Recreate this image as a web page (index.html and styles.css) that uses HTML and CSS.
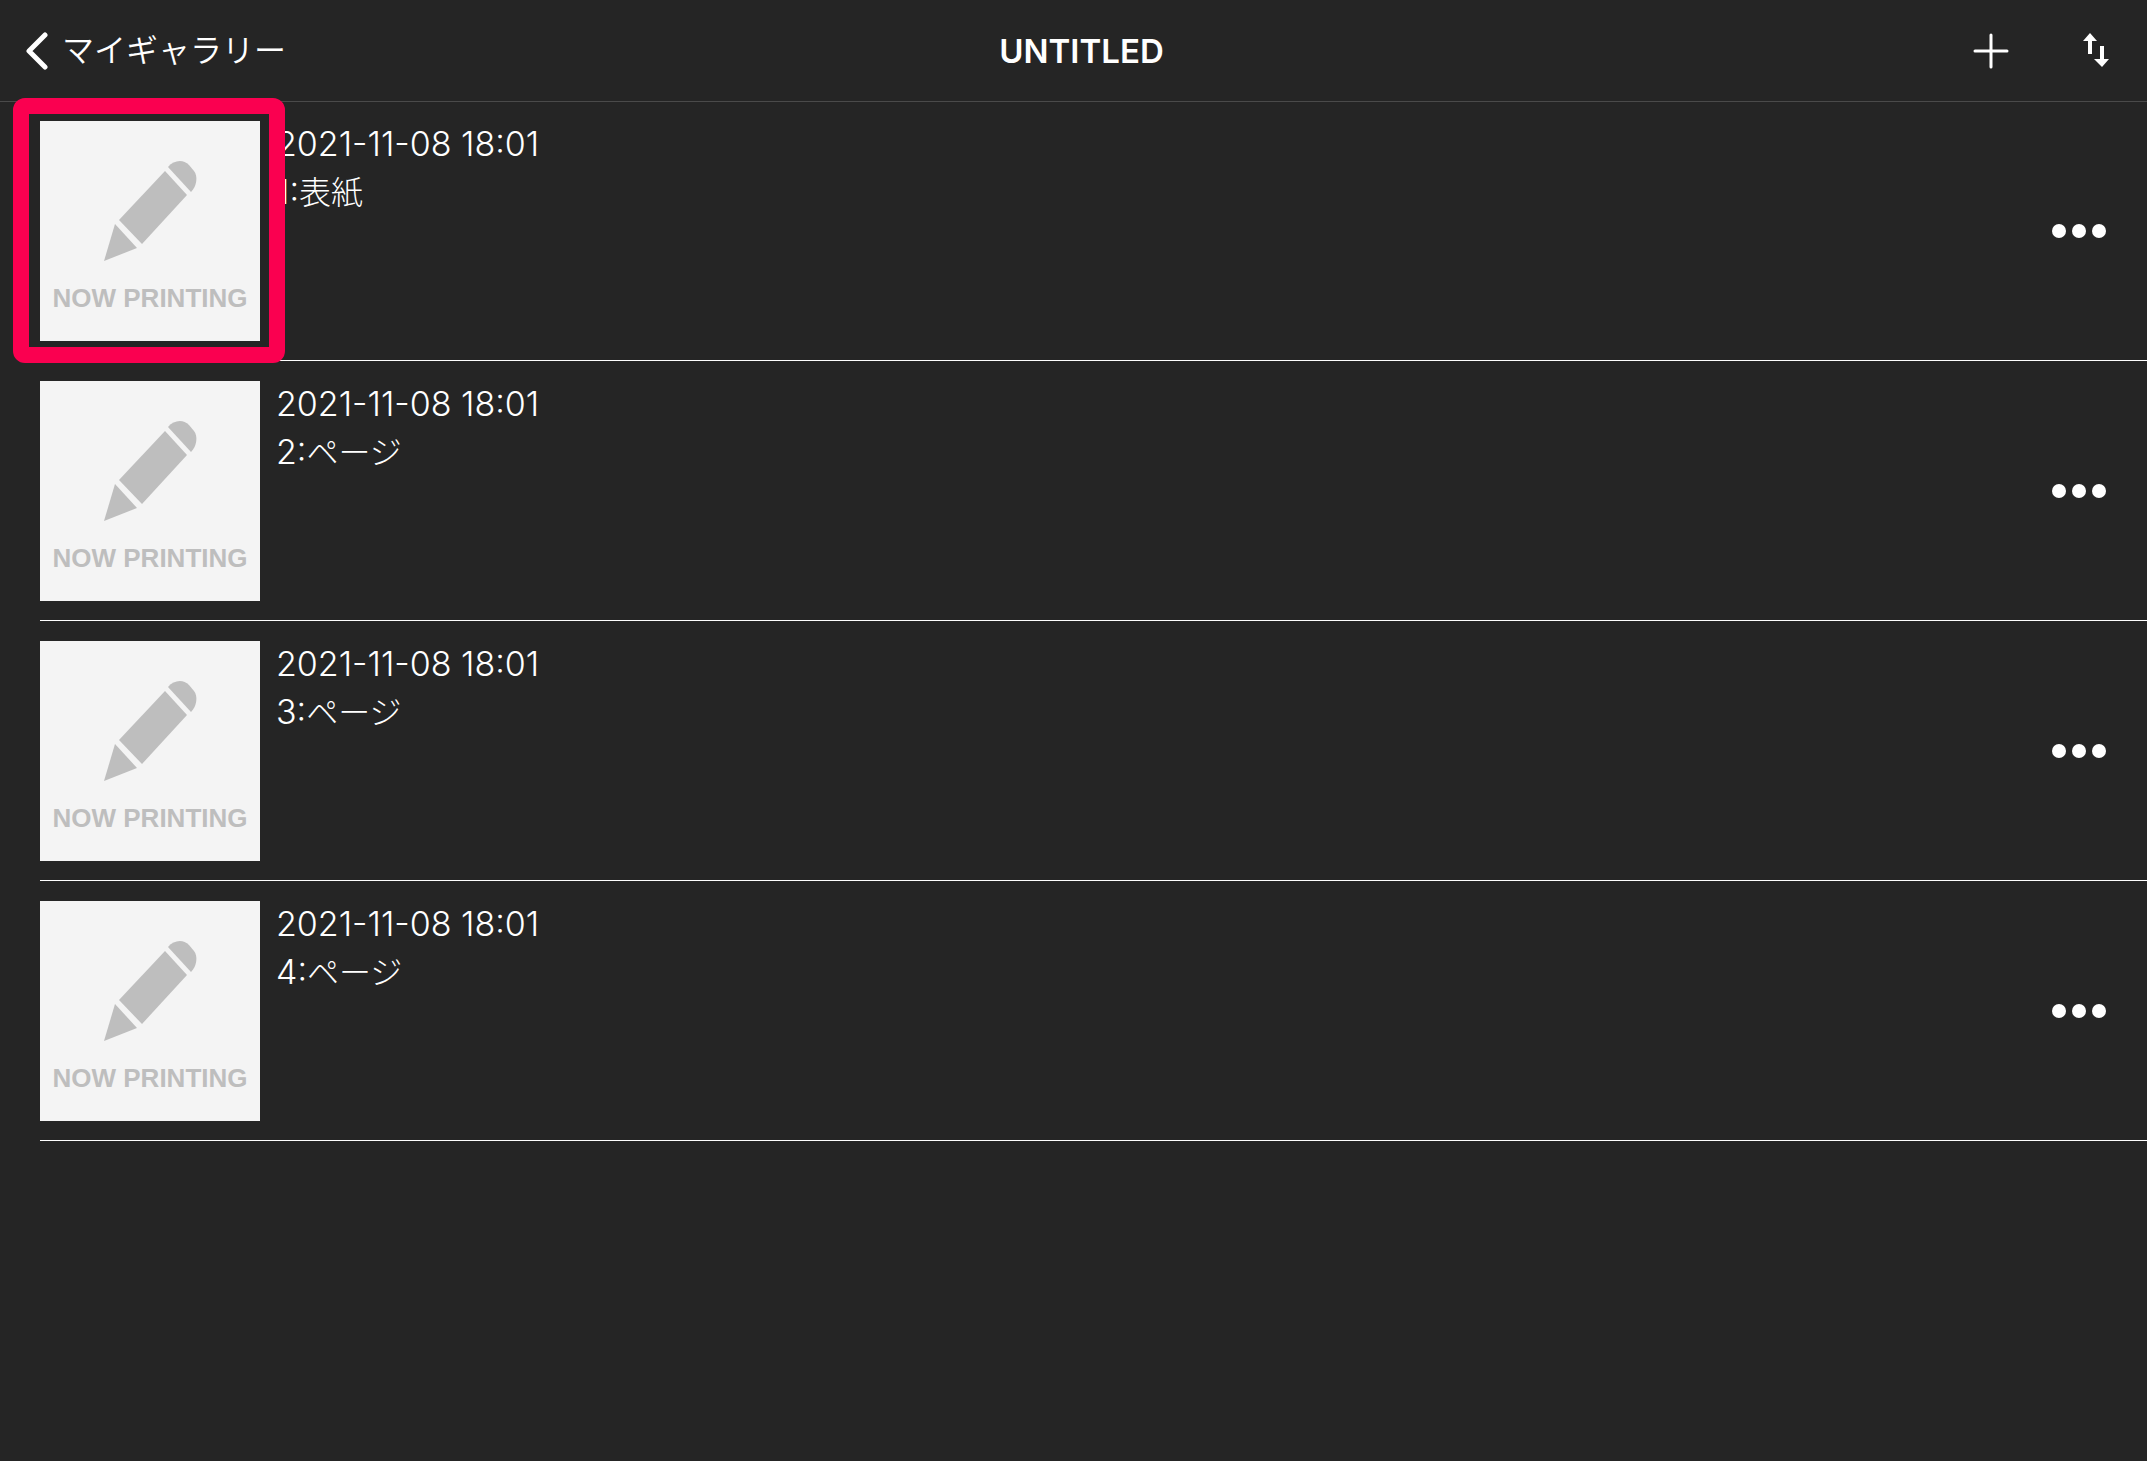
FILE: index.html
```html
<!DOCTYPE html>
<html lang="ja">
<head>
<meta charset="utf-8">
<meta name="viewport" content="width=device-width, initial-scale=1">
<title>UNTITLED</title>
<link rel="stylesheet" href="styles.css">
</head>
<body>

<!-- shared icons -->
<svg class="defs" aria-hidden="true">
  <symbol id="pencil" viewBox="0 0 220 150">
    <path d="M64 140 L75 103 L97 127 Z"/>
    <path d="M79 99 L125 50 L147 74 L102 123 Z"/>
    <path d="M128 46 C134 39 143 38 149 44 L154 50 C158 55 157 65 151 71 Z"/>
  </symbol>
  <symbol id="dots" viewBox="0 0 54 14">
    <circle cx="7" cy="7" r="7"/>
    <circle cx="27" cy="7" r="7"/>
    <circle cx="47" cy="7" r="7"/>
  </symbol>
</svg>

<header class="navbar">
  <a class="back" href="#">
    <svg class="chevron" viewBox="0 0 22 38"><path d="M19 3 L3 19 L19 35"/></svg>
    <span>マイギャラリー</span>
  </a>
  <h1 class="title">UNTITLED</h1>
  <div class="actions">
    <button type="button" aria-label="追加">
      <svg class="plus" viewBox="0 0 36 36"><path d="M18 2 V34 M2 18 H34"/></svg>
    </button>
    <button type="button" aria-label="並べ替え">
      <svg class="sort" viewBox="0 0 28 36"><path d="M9 0 L16 8 H11 V21 H7 V8 H2 Z M19 13 H23 V26 H28 L21 34 L13 26 H19 Z"/></svg>
    </button>
  </div>
</header>

<main>
  <ul class="pages">
    <li class="page">
      <a class="thumb selected" href="#">
        <svg class="pencil"><use href="#pencil"/></svg>
        <span class="caption">NOW PRINTING</span>
      </a>
      <div class="info">
        <time datetime="2021-11-08T18:01">2021-11-08 18:01</time>
        <p>1:<span class="name">表紙</span></p>
      </div>
      <button class="more" type="button" aria-label="メニュー"><svg><use href="#dots"/></svg></button>
    </li>
    <li class="page">
      <a class="thumb" href="#">
        <svg class="pencil"><use href="#pencil"/></svg>
        <span class="caption">NOW PRINTING</span>
      </a>
      <div class="info">
        <time datetime="2021-11-08T18:01">2021-11-08 18:01</time>
        <p>2:<span class="name">ページ</span></p>
      </div>
      <button class="more" type="button" aria-label="メニュー"><svg><use href="#dots"/></svg></button>
    </li>
    <li class="page">
      <a class="thumb" href="#">
        <svg class="pencil"><use href="#pencil"/></svg>
        <span class="caption">NOW PRINTING</span>
      </a>
      <div class="info">
        <time datetime="2021-11-08T18:01">2021-11-08 18:01</time>
        <p>3:<span class="name">ページ</span></p>
      </div>
      <button class="more" type="button" aria-label="メニュー"><svg><use href="#dots"/></svg></button>
    </li>
    <li class="page">
      <a class="thumb" href="#">
        <svg class="pencil"><use href="#pencil"/></svg>
        <span class="caption">NOW PRINTING</span>
      </a>
      <div class="info">
        <time datetime="2021-11-08T18:01">2021-11-08 18:01</time>
        <p>4:<span class="name">ページ</span></p>
      </div>
      <button class="more" type="button" aria-label="メニュー"><svg><use href="#dots"/></svg></button>
    </li>
  </ul>
</main>

</body>
</html>
```

FILE: styles.css
```css
*,
*::after {
  box-sizing: border-box;
}

body {
  margin: 0;
  background: #252525;
  color: #fff;
  font-family: Inter, "Noto Sans CJK JP", sans-serif;
  font-size: 34px;
  font-weight: 350;
  line-height: 48px;
}

a {
  color: inherit;
  text-decoration: none;
}

button {
  display: flex;
  padding: 0;
  border: 0;
  background: none;
  color: inherit;
  cursor: pointer;
}

svg {
  display: block;
  fill: currentColor;
}

.defs {
  display: none;
}

/* Top bar */
.navbar {
  display: grid;
  grid-template-columns: 1fr auto 1fr;
  align-items: center;
  height: 101px;
  padding: 0 38px 0 26px;
  box-shadow: 0 1px 0 #4a4a4a;
}

.back {
  display: flex;
  align-items: center;
  gap: 14px;
  font-size: 32px;
}

.chevron {
  width: 22px;
  height: 38px;
  fill: none;
  stroke: currentColor;
  stroke-width: 5;
  stroke-linecap: round;
  stroke-linejoin: round;
}

.title {
  margin: 0;
  padding-left: 28px;
  font-size: 33px;
  font-weight: 600;
}

.actions {
  display: flex;
  justify-content: flex-end;
  align-items: center;
  gap: 72px;
}

.plus {
  width: 36px;
  height: 36px;
  fill: none;
  stroke: currentColor;
  stroke-width: 3;
  stroke-linecap: round;
}

.sort {
  width: 28px;
  height: 36px;
}

/* Page list */
.pages {
  margin: 0;
  padding: 0 0 0 40px;
  list-style: none;
}

.page {
  display: flex;
  gap: 16px;
  padding: 20px 41px 19px 0;
  border-bottom: 1px solid #fff;
}

.thumb {
  position: relative;
  width: 220px;
  height: 220px;
  background: #f4f4f4;
  color: #bebebe;
}

/* frame drawn over the picked thumbnail */
.selected::after {
  content: "";
  position: absolute;
  top: -23px;
  left: -27px;
  width: 272px;
  height: 265px;
  border: 16px solid #fa0050;
  border-radius: 12px;
}

.pencil {
  width: 220px;
  height: 150px;
}

.caption {
  display: block;
  font: bold 26px/54px "Liberation Sans", Arial, sans-serif;
  text-align: center;
}

.info {
  flex: 1;
  margin-top: -1px;
}

.info time {
  display: block;
}

.info p {
  margin: 0;
}

.name {
  font-size: 32px;
  font-weight: 300;
  line-height: 1;
}

.more {
  align-self: center;
}

.more svg {
  width: 54px;
  height: 14px;
}
```
